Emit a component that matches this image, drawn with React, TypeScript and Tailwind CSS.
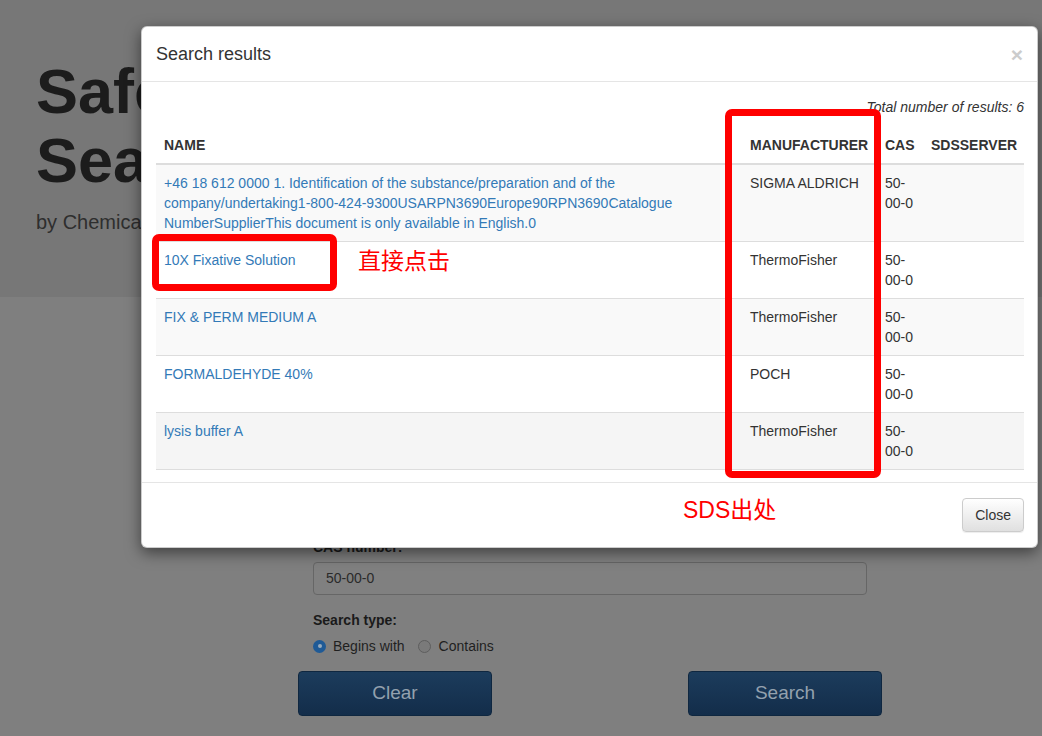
import React from 'react';

const font = { fontFamily: '"Liberation Sans", Arial, "Noto Sans CJK SC", sans-serif' };

type Row = { name: React.ReactNode; maker: string };

const rows: Row[] = [
  {
    name: (
      <>
        +46 18 612 0000 1. Identification of the substance/preparation and of the
        <br />
        company/undertaking1-800-424-9300USARPN3690Europe90RPN3690Catalogue
        <br />
        NumberSupplierThis document is only available in English.0
      </>
    ),
    maker: 'SIGMA ALDRICH',
  },
  { name: '10X Fixative Solution', maker: 'ThermoFisher' },
  { name: 'FIX & PERM MEDIUM A', maker: 'ThermoFisher' },
  { name: 'FORMALDEHYDE 40%', maker: 'POCH' },
  { name: 'lysis buffer A', maker: 'ThermoFisher' },
];

const rowBg = ['bg-[#f9f9f9]', 'bg-white', 'bg-[#f9f9f9]', 'bg-white', 'bg-[#f5f5f5]'];

function Backdrop() {
  // the page behind the modal, already dimmed by the backdrop
  return (
    <div className="min-h-[736px] w-full bg-[#7f7f7f]">
      <div className="h-[297px] bg-[#777777] pl-[36px] pt-[57px]">
        <h1 className="whitespace-nowrap text-[63px] font-bold leading-[1.1] text-[#1c1c1c]">
          Safety Data Sheet
          <br />
          Search
        </h1>
        <p className="mt-[11px] text-[20px] leading-[30px] text-[#2e2e2e]">by Chemical Safety Software</p>
      </div>
      <div className="w-[584px] pt-[240px]" style={{ marginLeft: 298 }}>
        <div className="px-[15px]">
          <div className="text-[14px] font-bold leading-[20px] text-[#1a1a1a]">CAS number:</div>
          <div className="mt-[5px] flex h-[33px] items-center rounded-[4px] border border-[#666] bg-[#808080] px-[12px] text-[14px] text-[#2a2a2a]">
            50-00-0
          </div>
          <div className="mt-[15px] text-[14px] font-bold leading-[20px] text-[#1a1a1a]">Search type:</div>
          <div className="mt-[6px] flex items-center text-[14px] leading-[20px] text-[#1f1f1f]">
            <span className="flex h-[13px] w-[13px] items-center justify-center rounded-full bg-[#1f5a96]">
              <span className="h-[4px] w-[4px] rounded-full bg-[#9ab]" />
            </span>
            <span className="ml-[7px]">Begins with</span>
            <span className="ml-[13px] h-[13px] w-[13px] rounded-full border border-[#5e5e5e] bg-[#7a7a7a]" />
            <span className="ml-[8px]">Contains</span>
          </div>
        </div>
        <div className="mt-[15px] flex justify-between">
          <button className="h-[45px] w-[194px] rounded-[4px] border border-[#0f2740] bg-gradient-to-b from-[#1c3c5c] to-[#132d4a] text-[19px] text-[#93a1ae]">
            Clear
          </button>
          <button className="h-[45px] w-[194px] rounded-[4px] border border-[#0f2740] bg-gradient-to-b from-[#1c3c5c] to-[#132d4a] text-[19px] text-[#93a1ae]">
            Search
          </button>
        </div>
      </div>
    </div>
  );
}

function Modal() {
  return (
    <div className="absolute left-[141px] top-[26px] w-[897px] rounded-[6px] border border-black/20 bg-white shadow-[0_5px_15px_rgba(0,0,0,0.5)]">
      <div className="relative">
        {/* header */}
        <div className="flex items-center justify-between border-b border-[#e5e5e5] py-[14px] pl-[14px] pr-[13px]">
          <h4 className="text-[18px] leading-[26px] text-[#333]">Search results</h4>
          <span className="mr-[1px] text-[21px] font-bold leading-none text-[#cccccc]">×</span>
        </div>

        {/* body */}
        <div className="pb-[12px] pl-[14px] pr-[13px] pt-[15px]">
          <p className="text-right text-[14px] italic leading-[20px] text-[#333]">Total number of results: 6</p>
          <table className="mt-[10px] w-[868px] table-fixed border-collapse text-[14px] leading-[20px]">
            <colgroup>
              <col className="w-[586px]" />
              <col className="w-[135px]" />
              <col className="w-[46px]" />
              <col className="w-[101px]" />
            </colgroup>
            <thead>
              <tr className="border-b-2 border-[#dddddd] text-left text-[#333]">
                <th className="whitespace-nowrap p-[8px] font-bold">NAME</th>
                <th className="whitespace-nowrap p-[8px] font-bold">MANUFACTURER</th>
                <th className="whitespace-nowrap p-[8px] font-bold">CAS</th>
                <th className="whitespace-nowrap p-[8px] font-bold">SDSSERVER</th>
              </tr>
            </thead>
            <tbody>
              {rows.map((r, i) => (
                <tr key={i} className={`${rowBg[i]} border-b border-[#dddddd] align-top`}>
                  <td className="p-[8px] text-[#337ab7]">
                    {r.name}
                    {i > 0 && <br />}
                  </td>
                  <td className="p-[8px] text-[#333]">{r.maker}</td>
                  <td className="p-[8px] text-[#333]">
                    50-
                    <br />
                    00-0
                  </td>
                  <td className="p-[8px]" />
                </tr>
              ))}
            </tbody>
          </table>
        </div>

        {/* footer */}
        <div className="flex justify-end border-t border-[#e5e5e5] py-[15px] pl-[14px] pr-[13px]">
          <button className="h-[34px] rounded-[4px] border border-[#cccccc] bg-gradient-to-b from-white to-[#e0e0e0] px-[12px] text-[14px] text-[#333] shadow-[0_1px_1px_rgba(0,0,0,0.075)]">
            Close
          </button>
        </div>

        {/* red annotations */}
        <div className="absolute left-[10px] top-[207px] h-[57px] w-[185px] rounded-[7px] border-[7px] border-[#ff0000]" />
        <div className="absolute left-[216px] top-[221px] text-[23px] leading-[26px] text-[#ff0000]">直接点击</div>
        <div className="absolute left-[583px] top-[82px] h-[369px] w-[156px] rounded-[7px] border-[7px] border-[#ff0000]" />
        <div className="absolute left-[541px] top-[470px] text-[23px] leading-[26px] text-[#ff0000]">SDS出处</div>
      </div>
    </div>
  );
}

export default function App() {
  return (
    <div className="relative h-[736px] w-[1042px] overflow-hidden" style={font}>
      <Backdrop />
      <Modal />
    </div>
  );
}
